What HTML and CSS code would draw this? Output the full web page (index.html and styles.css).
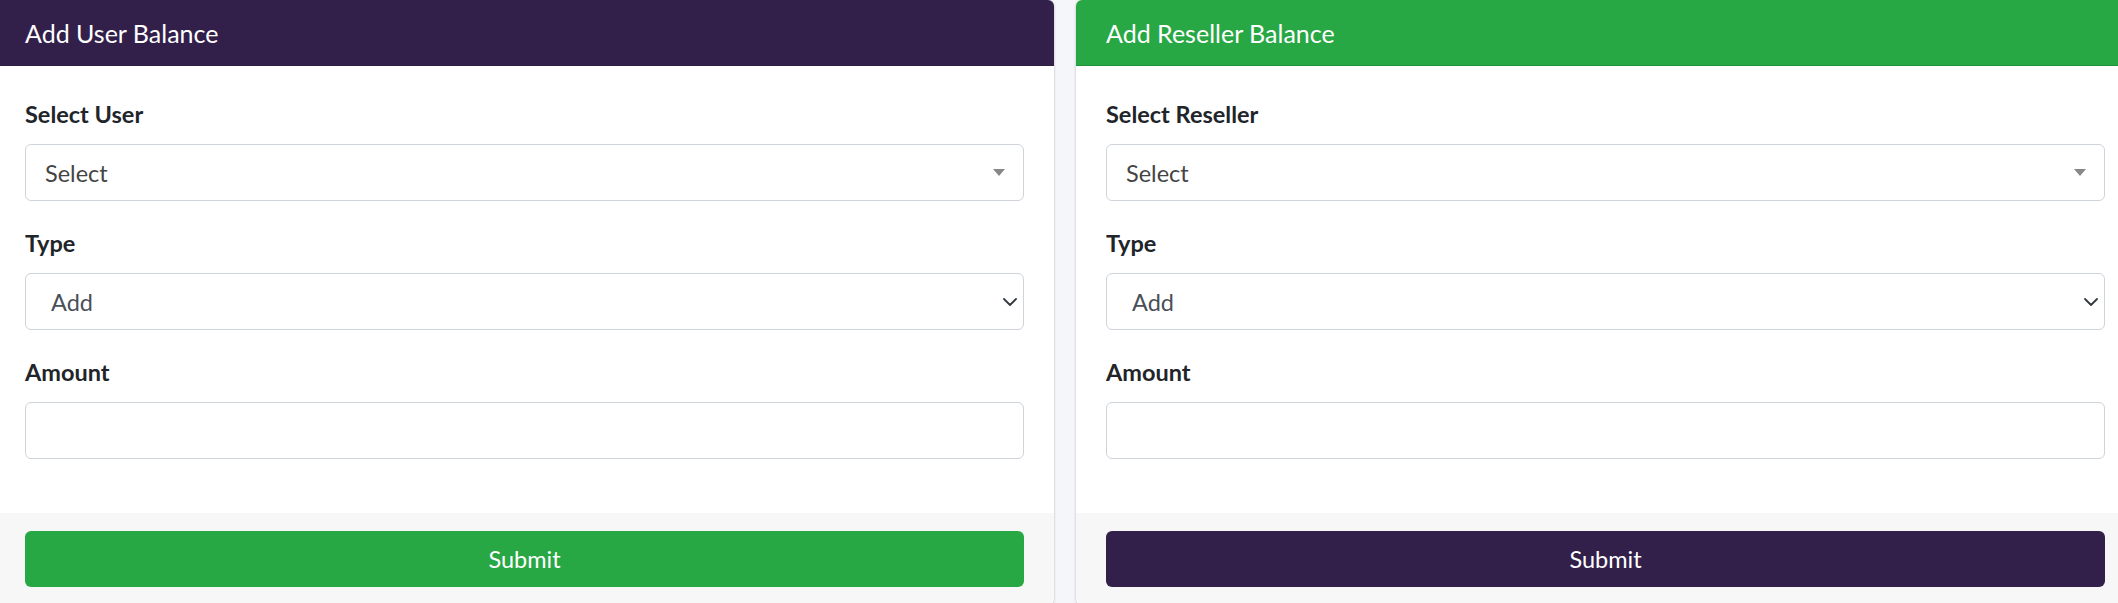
FILE: index.html
```html
<!DOCTYPE html>
<html lang="en">
<head>
<meta charset="utf-8">
<title>Balance</title>
<link rel="stylesheet" href="styles.css">
</head>
<body>
<div class="row">
  <section class="card">
    <header class="card-header bg-purple"><h3 class="card-title">Add User Balance</h3></header>
    <div class="card-body">
      <div class="form-group">
        <label class="form-label">Select User</label>
        <div class="select2">
          <span class="select2-text">Select</span>
          <span class="select2-arrow"></span>
        </div>
      </div>
      <div class="form-group">
        <label class="form-label">Type</label>
        <div class="select-wrap">
          <select class="form-select"><option>Add</option><option>Deduct</option></select>
          <svg class="chevron" viewBox="0 0 14 8" width="14" height="8"><path d="M1 1 L7 7 L13 1" fill="none" stroke="#343a40" stroke-width="1.8" stroke-linecap="round" stroke-linejoin="round"/></svg>
        </div>
      </div>
      <div class="form-group">
        <label class="form-label">Amount</label>
        <input class="form-control" type="text">
      </div>
    </div>
    <footer class="card-footer"><button class="btn bg-green" type="button">Submit</button></footer>
  </section>
  <section class="card">
    <header class="card-header bg-green"><h3 class="card-title">Add Reseller Balance</h3></header>
    <div class="card-body">
      <div class="form-group">
        <label class="form-label">Select Reseller</label>
        <div class="select2">
          <span class="select2-text">Select</span>
          <span class="select2-arrow"></span>
        </div>
      </div>
      <div class="form-group">
        <label class="form-label">Type</label>
        <div class="select-wrap">
          <select class="form-select"><option>Add</option><option>Deduct</option></select>
          <svg class="chevron" viewBox="0 0 14 8" width="14" height="8"><path d="M1 1 L7 7 L13 1" fill="none" stroke="#343a40" stroke-width="1.8" stroke-linecap="round" stroke-linejoin="round"/></svg>
        </div>
      </div>
      <div class="form-group">
        <label class="form-label">Amount</label>
        <input class="form-control" type="text">
      </div>
    </div>
    <footer class="card-footer"><button class="btn bg-purple" type="button">Submit</button></footer>
  </section>
</div>
</body>
</html>
```
FILE: styles.css
```css
* { box-sizing: border-box; }
html, body { margin: 0; padding: 0; }
body {
  background: #f4f6f9;
  font-family: Lato, "Open Sans", sans-serif;
  color: #212529;
  overflow: hidden;
  width: 2118px;
  height: 603px;
}
.row {
  display: flex;
  gap: 22px;
  margin-left: -5px;
}
.card {
  flex: 0 0 1059px;
  background: #fff;
  border-radius: 6px;
  box-shadow: 0 0 1px rgba(0,0,0,.125), 0 1px 3px rgba(0,0,0,.2);
  overflow: hidden;
}
.card-header {
  padding: 18px 30px 17px;
  border-bottom: 1px solid rgba(0,0,0,.125);
  color: #fff;
}
.card-title {
  margin: 0;
  font-size: 25px;
  font-weight: 400;
  line-height: 30px;
}
.bg-purple { background: #33204a; color: #fff; }
.bg-green { background: #28a745; color: #fff; }
.card-body {
  padding: 30px 30px 30px;
}
.form-group {
  display: flex;
  flex-direction: column;
  margin-bottom: 24px;
}
.form-label {
  font-size: 23.5px;
  font-weight: 700;
  line-height: 36px;
  margin-bottom: 12px;
}
.select2, .form-select, .form-control {
  height: 57px;
  width: 100%;
  border: 1px solid #ced4da;
  border-radius: 6px;
  background: #fff;
  font-family: inherit;
  font-size: 23.5px;
}
.select2 {
  display: flex;
  align-items: center;
  justify-content: space-between;
  padding: 0 18px 0 19px;
  color: #444;
}
.select2-arrow {
  width: 0;
  height: 0;
  border-style: solid;
  border-width: 7px 6px 0 6px;
  border-color: #888 transparent transparent transparent;
}
.select-wrap {
  position: relative;
}
.form-select {
  appearance: none;
  -webkit-appearance: none;
  padding: 0 40px 0 25px;
  color: #495057;
  outline: none;
}
.chevron {
  position: absolute;
  right: 7px;
  top: 25px;
  pointer-events: none;
}
.form-control {
  padding: 0 18px;
  color: #495057;
  outline: none;
}
.card-footer {
  background: #f7f7f7;
  padding: 18px 30px;
}
.btn {
  display: block;
  width: 100%;
  height: 56px;
  border: 1px solid transparent;
  border-radius: 6px;
  font-family: inherit;
  font-size: 23.5px;
  line-height: 36px;
  color: #fff;
  cursor: pointer;
}
```
